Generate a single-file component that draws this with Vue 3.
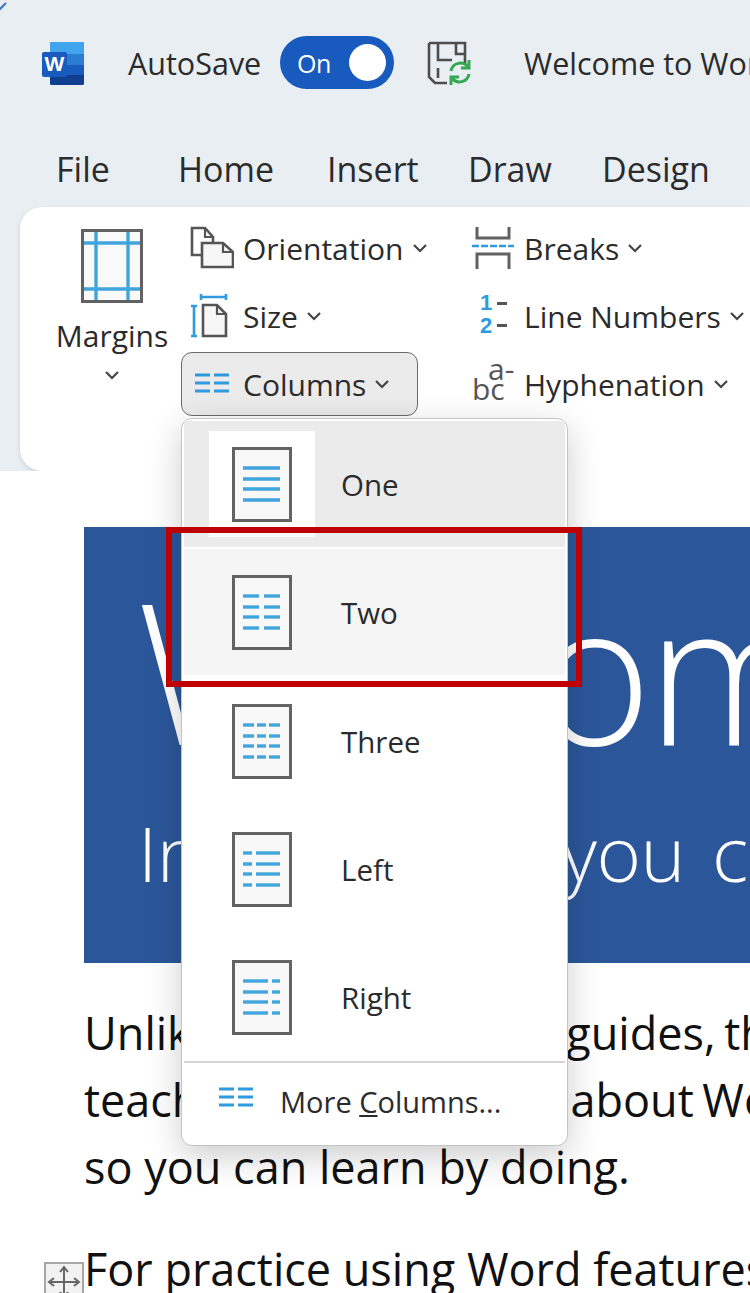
<script setup>
const tabs = ['File', 'Home', 'Insert', 'Draw', 'Design']

const columnOptions = [
  { label: 'One', lines: [[11, 48]], active: true },
  { label: 'Two', lines: [[11, 27], [32, 48]], hover: true },
  { label: 'Three', lines: [[11, 22], [25, 34], [37, 48]] },
  { label: 'Left', lines: [[11, 20], [24, 48]] },
  { label: 'Right', lines: [[11, 36], [40, 48]] }
]
const lineRows = [21, 32, 42, 53]
</script>

<template>
  <div class="app">
    <svg class="corner-mark" width="10" height="12" viewBox="0 0 10 12">
      <path d="M-1 10 L6 3" stroke="#3f6fc4" stroke-width="2" fill="none" />
    </svg>

    <header class="titlebar">
      <svg class="word-logo" width="44" height="44" viewBox="0 0 44 44">
        <rect x="9" y="1" width="34" height="43" rx="2" fill="#1a5cbd" />
        <path d="M9 3a2 2 0 0 1 2-2h30a2 2 0 0 1 2 2v10H9z" fill="#41a5ee" />
        <rect x="9" y="13" width="34" height="11" fill="#2b7cd3" />
        <path d="M9 34h34v8a2 2 0 0 1-2 2H11a2 2 0 0 1-2-2z" fill="#103f91" />
        <rect x="1" y="11" width="25" height="25" rx="2" fill="#185abd" />
        <text x="13.5" y="30" text-anchor="middle" class="word-letter">W</text>
      </svg>
      <span class="autosave">AutoSave</span>
      <div class="toggle">
        <span>On</span>
        <i class="toggle__knob"></i>
      </div>
      <svg class="save-icon" width="46" height="46" viewBox="0 0 46 46">
        <path d="M3 3h36v21M3 3v34l6 6h12" fill="none" stroke="#4d4d4d" stroke-width="2.6" />
        <path d="M12 3v17h14M30 3v11h9M12 28v10" fill="none" stroke="#4d4d4d" stroke-width="2.6" />
        <path d="M25 31a9.5 9.5 0 0 1 17-4M43 20v8h-8M43 34a9.5 9.5 0 0 1-17 4M25 45v-8h8" fill="none" stroke="#35a852" stroke-width="3" />
      </svg>
      <span class="doc-title">Welcome to Word</span>
    </header>

    <nav class="tabs">
      <span v-for="tab in tabs" :key="tab" class="tab">{{ tab }}</span>
    </nav>

    <section class="ribbon">
      <div class="margins">
        <svg width="62" height="74" viewBox="0 0 62 74">
          <rect x="1.5" y="1.5" width="59" height="71" fill="#f9f9f9" stroke="#616161" stroke-width="3" />
          <path d="M15 3v68M47 3v68M3 14h56M3 60h56" stroke="#41a5dd" stroke-width="3.4" fill="none" />
        </svg>
        <span class="margins__label">Margins</span>
        <svg class="chevron" width="16" height="10" viewBox="0 0 16 10"><path d="M2 2l6 6 6-6" /></svg>
      </div>

      <div class="ribbon-col">
        <div class="ribbon-btn">
          <svg class="ribbon-icon" width="44" height="44" viewBox="0 0 44 44">
            <path d="M12 29H2V2h13l8 9v6" fill="none" stroke="#555" stroke-width="2.6" />
            <path d="M15 2v9h8" fill="none" stroke="#555" stroke-width="2.2" />
            <path d="M12 17h21l10 9v15H12z" fill="#f7f7f7" stroke="#555" stroke-width="2.6" />
            <path d="M33 17v9h10" fill="none" stroke="#555" stroke-width="2.2" />
          </svg>
          <span>Orientation</span>
          <svg class="chevron" width="16" height="10" viewBox="0 0 16 10"><path d="M2 2l6 6 6-6" /></svg>
        </div>
        <div class="ribbon-btn">
          <svg class="ribbon-icon" width="44" height="44" viewBox="0 0 44 44">
            <path d="M11 3h25M11 0v6M36 0v6M4 12v30M1 12h6M1 42h6" stroke="#2f9ade" stroke-width="2.6" fill="none" />
            <path d="M13 11h14l9 9v22H13z" fill="#f7f7f7" stroke="#555" stroke-width="2.6" />
            <path d="M27 11v9h9" fill="none" stroke="#555" stroke-width="2.2" />
          </svg>
          <span>Size</span>
          <svg class="chevron" width="16" height="10" viewBox="0 0 16 10"><path d="M2 2l6 6 6-6" /></svg>
        </div>
        <div class="ribbon-btn ribbon-btn--open">
          <svg class="ribbon-icon" width="44" height="24" viewBox="0 0 44 24">
            <path d="M5 3h15M5 11h15M5 19h15M24 3h15M24 11h15M24 19h15" stroke="#2f9ade" stroke-width="3" fill="none" />
          </svg>
          <span>Columns</span>
          <svg class="chevron" width="16" height="10" viewBox="0 0 16 10"><path d="M2 2l6 6 6-6" /></svg>
        </div>
      </div>

      <div class="ribbon-col ribbon-col--second">
        <div class="ribbon-btn">
          <svg class="ribbon-icon" width="44" height="44" viewBox="0 0 44 44">
            <path d="M6 1v11h32V1M6 43V28h32v15" fill="none" stroke="#616161" stroke-width="3" />
            <path d="M1 20h42" stroke="#2f9ade" stroke-width="2.6" stroke-dasharray="7 2" fill="none" />
          </svg>
          <span>Breaks</span>
          <svg class="chevron" width="16" height="10" viewBox="0 0 16 10"><path d="M2 2l6 6 6-6" /></svg>
        </div>
        <div class="ribbon-btn">
          <div class="ribbon-icon line-nums">
            <b>1<br />2</b>
            <i></i>
            <i class="line-nums__low"></i>
          </div>
          <span>Line Numbers</span>
          <svg class="chevron" width="16" height="10" viewBox="0 0 16 10"><path d="M2 2l6 6 6-6" /></svg>
        </div>
        <div class="ribbon-btn">
          <div class="ribbon-icon hyphen">
            <span class="hyphen__top">a-</span>
            <span class="hyphen__low">bc</span>
          </div>
          <span>Hyphenation</span>
          <svg class="chevron" width="16" height="10" viewBox="0 0 16 10"><path d="M2 2l6 6 6-6" /></svg>
        </div>
      </div>
    </section>

    <main class="doc">
      <div class="banner">
        <div class="banner__title">Welcome</div>
        <div class="banner__sub">Instructions you can edit</div>
      </div>
      <div class="para">
        <p class="para__tight">Unlike old-style how-to guides, this</p>
        <p class="para__tight">teaches you everything about Word</p>
        <p>so you can learn by doing.</p>
      </div>
      <div class="practice">
        <div class="move-handle">
          <svg width="36" height="36" viewBox="0 0 36 36">
            <path d="M18 3v30M3 18h30M14 8l4-5 4 5M14 28l4 5 4-5M8 14l-5 4 5 4M28 14l5 4-5 4" fill="none" stroke="#666" stroke-width="2" />
          </svg>
        </div>
        <p>For practice using Word features</p>
      </div>
    </main>

    <div class="menu">
      <div
        v-for="option in columnOptions"
        :key="option.label"
        class="menu-item"
        :class="{ 'menu-item--active': option.active, 'menu-item--hover': option.hover }"
      >
        <div class="menu-item__thumb">
          <svg width="60" height="75" viewBox="0 0 60 75">
            <rect x="1.5" y="1.5" width="57" height="72" fill="#f8f8f8" stroke="#636363" stroke-width="3" />
            <template v-for="row in lineRows" :key="row">
              <path
                v-for="seg in option.lines"
                :key="seg[0]"
                :d="`M${seg[0]} ${row}H${seg[1]}`"
                stroke="#41a5dd"
                stroke-width="3.4"
              />
            </template>
          </svg>
        </div>
        <span class="menu-item__label">{{ option.label }}</span>
      </div>
      <div class="menu-more">
        <svg width="36" height="24" viewBox="0 0 36 24">
          <path d="M1 3h15M1 11h15M1 19h15M20 3h15M20 11h15M20 19h15" stroke="#2f9ade" stroke-width="3" fill="none" />
        </svg>
        <span>More <u>C</u>olumns...</span>
      </div>
    </div>

    <div class="callout"></div>
  </div>
</template>

<style scoped>
.app {
  position: relative;
  width: 750px;
  height: 1293px;
  overflow: hidden;
  background: #e9eef3;
  font-family: "Open Sans", "Noto Sans", sans-serif;
  color: #2b2b2b;
}

.corner-mark {
  position: absolute;
  left: 0;
  top: 0;
}

.titlebar {
  display: flex;
  align-items: center;
  height: 125px;
  padding-left: 41px;
  white-space: nowrap;
}

.word-logo {
  flex: none;
}

.word-letter {
  font-family: "Liberation Sans", sans-serif;
  font-size: 21px;
  font-weight: 700;
  fill: #fff;
}

.autosave {
  flex: none;
  width: 134px;
  margin-left: 43px;
  font-size: 30.5px;
}

.toggle {
  display: flex;
  align-items: center;
  justify-content: space-between;
  flex: none;
  width: 114px;
  height: 53px;
  margin-left: 18px;
  padding: 0 8px 0 17px;
  box-sizing: border-box;
  border-radius: 27px;
  background: #185abd;
  color: #fff;
  font-size: 25px;
  letter-spacing: -0.5px;
}

.toggle__knob {
  width: 37px;
  height: 37px;
  border-radius: 50%;
  background: #fff;
}

.save-icon {
  flex: none;
  margin-left: 32px;
}

.doc-title {
  margin-left: 52px;
  font-size: 30.5px;
}

.tabs {
  display: flex;
  height: 82px;
  padding-left: 56px;
  font-size: 34px;
  line-height: 88px;
}

.tab:nth-child(1) { width: 122px; }
.tab:nth-child(2) { width: 149px; }
.tab:nth-child(3) { width: 141px; }
.tab:nth-child(4) { width: 134px; }

.ribbon {
  display: flex;
  height: 264px;
  margin-left: 20px;
  box-sizing: border-box;
  padding-top: 7px;
  background: #fff;
  border-radius: 22px 0 0 22px;
  box-shadow: 0 2px 5px rgba(0, 0, 0, 0.12);
  font-size: 30px;
  white-space: nowrap;
}

.margins {
  display: flex;
  flex-direction: column;
  align-items: center;
  flex: none;
  width: 114px;
  margin-left: 35px;
  padding-top: 15px;
}

.margins__label {
  margin-top: 12px;
}

.margins .chevron {
  margin: 14px 0 0;
}

.ribbon-col {
  display: flex;
  flex-direction: column;
  flex: none;
  width: 281px;
  margin-left: 12px;
}

.ribbon-col--second {
  margin-left: 0;
}

.ribbon-btn {
  display: flex;
  align-items: center;
  align-self: flex-start;
  height: 68px;
  box-sizing: border-box;
  padding: 0 24px 0 8px;
  border: 1px solid transparent;
}

.ribbon-btn--open {
  width: 237px;
  height: 64px;
  margin-top: 2px;
  background: #ebebeb;
  border: 1.5px solid #6b6b6b;
  border-radius: 11px;
}

.ribbon-icon {
  flex: none;
  width: 44px;
  margin-right: 9px;
}

.chevron {
  flex: none;
  margin-left: 8px;
  fill: none;
  stroke: #444;
  stroke-width: 2.2;
}

.line-nums {
  position: relative;
  height: 44px;
  color: #2f9ade;
}

.line-nums b {
  position: absolute;
  left: 9px;
  top: -3px;
  font-family: "Liberation Sans", sans-serif;
  font-size: 22px;
  line-height: 23px;
}

.line-nums i {
  position: absolute;
  left: 26px;
  top: 8px;
  width: 10px;
  height: 3px;
  background: #555;
}

.line-nums i.line-nums__low {
  top: 30px;
}

.hyphen {
  position: relative;
  height: 44px;
  color: #555;
  font-size: 30px;
}

.hyphen__top {
  position: absolute;
  left: 17px;
  top: -14px;
}

.hyphen__low {
  position: absolute;
  left: 1px;
  top: 6px;
}

.doc {
  height: 822px;
  padding: 56px 0 0 84px;
  box-sizing: border-box;
  background: #fff;
  white-space: nowrap;
}

.banner {
  height: 436px;
  overflow: hidden;
  background: #2b579a;
  color: #fff;
  font-weight: 300;
}

.banner__title {
  height: 262px;
  padding-left: 53px;
  font-size: 196px;
  line-height: 284px;
  letter-spacing: -5px;
}

.banner__sub {
  padding-left: 54px;
  font-size: 76px;
  line-height: 128px;
  letter-spacing: -0.5px;
  word-spacing: 8px;
}

.para {
  margin-top: 36px;
}

.para p,
.practice p {
  margin: 0;
  color: #111;
  font-size: 45px;
  line-height: 67px;
}

.para p.para__tight {
  word-spacing: -3px;
}

.practice {
  position: relative;
  margin-top: 35px;
}

.move-handle {
  position: absolute;
  left: -40px;
  top: 27px;
  width: 40px;
  height: 40px;
  box-sizing: border-box;
  background: #f2f2f2;
  border: 2px solid #a6a6a6;
}

.move-handle svg {
  display: block;
}

.menu {
  position: absolute;
  left: 181px;
  top: 418px;
  width: 387px;
  height: 728px;
  box-sizing: border-box;
  padding: 2px 2px 0;
  background: #fff;
  border: 1px solid #c4c4c4;
  border-radius: 11px;
  box-shadow: 0 10px 34px rgba(0, 0, 0, 0.2);
}

.menu-item {
  display: flex;
  align-items: center;
  height: 128px;
  font-size: 29.5px;
}

.menu-item--active {
  height: 126px;
  margin-bottom: 2px;
  background: #ebebeb;
}

.menu-item--hover {
  height: 126px;
  margin-bottom: 2px;
  background: #f5f5f5;
}

.menu-item__thumb {
  display: flex;
  align-items: center;
  justify-content: center;
  flex: none;
  width: 106px;
  height: 106px;
  margin-left: 25px;
}

.menu-item--active .menu-item__thumb {
  background: #fff;
}

.menu-item__thumb svg {
  display: block;
}

.menu-item__label {
  margin-left: 26px;
}

.menu-more {
  display: flex;
  align-items: center;
  height: 82px;
  padding: 0 0 4px 34px;
  box-sizing: border-box;
  border-top: 2px solid #d4d4d4;
  font-size: 29px;
}

.menu-more svg {
  flex: none;
  margin-top: -6px;
}

.menu-more span {
  margin-left: 26px;
}

.callout {
  position: absolute;
  left: 166px;
  top: 527px;
  width: 416px;
  height: 160px;
  box-sizing: border-box;
  border: 6px solid #c00000;
}
</style>
